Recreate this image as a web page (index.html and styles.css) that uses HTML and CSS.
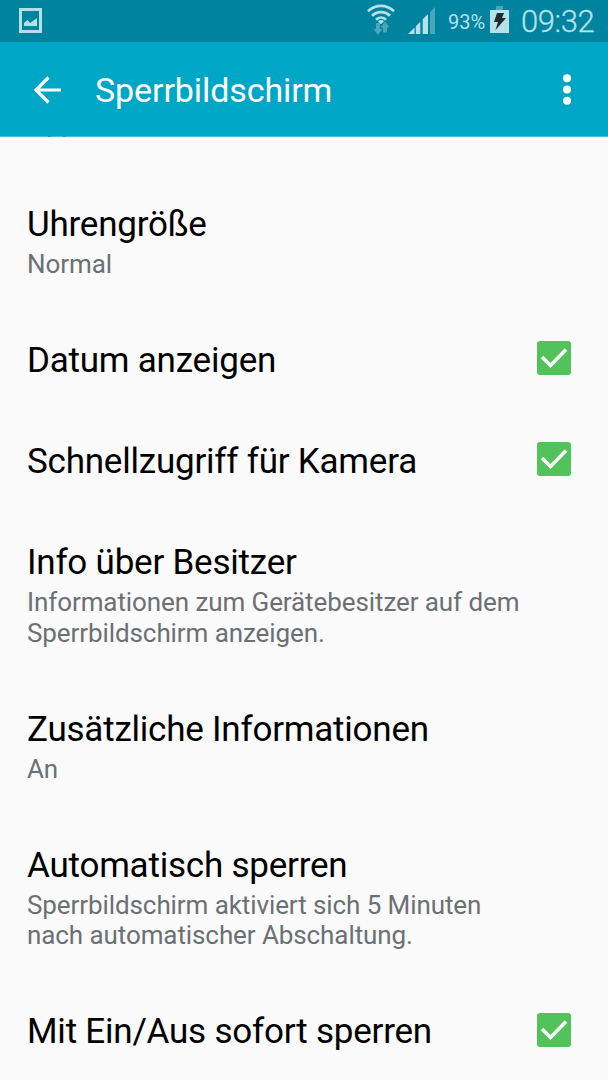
FILE: index.html
```html
<!DOCTYPE html>
<html lang="de">
<head>
<meta charset="utf-8">
<title>Sperrbildschirm</title>
<link rel="stylesheet" href="styles.css">
</head>
<body>
<div class="statusbar">
  <svg class="ic-picture" width="24" height="26" viewBox="0 0 24 26"><path fill="#b5dfe7" fill-rule="evenodd" d="M0 0h23v25H0zM3 3v19h17V3z"/><path fill="#b5dfe7" d="M5 18v-3l3.500-3 2.500 3 7-5V18z"/></svg>
  <div class="status-right">
    <svg class="ic-wifi" width="28" height="31" viewBox="0 0 28 31"><path fill="#49a7ba" d="M9 19h4v6h2.500L11 31l-4.500-6H9zM16 28.500v-5h-2.500l4.500-6 4.500 6H20v5z"/><g fill="none" stroke="#b5e1e9" stroke-width="2.800"><path d="M1 7.200C8.500.200 19.500.200 27 7.200"/><path d="M5 11.800C10 6.800 18 6.800 23 11.800"/><path d="M9 15.700C12 12.800 16 12.800 19 15.700"/></g><path fill="#b5e1e9" d="M11 17.200q3-2.200 6 0L14 20.200z"/></svg>
    <svg class="ic-signal" width="28" height="28" viewBox="0 0 28 28"><path fill="#b5e1e9" d="M0 27l6.500-6.500V27zM7.800 27v-7.800L12.300 14.700V27zM14.700 27V12.300L20 7V27z"/><path fill="#49a7ba" d="M22 27V5L27 0v27z"/></svg>
    <span class="percent">93%</span>
    <svg class="ic-battery" width="19" height="27" viewBox="0 0 19 27"><path fill="#49a7ba" d="M6 0h7v4H6z"/><path fill="#b5e1e9" d="M0 4h19v23H0z"/><path fill="#25292b" d="M7 7h7l-2 5h4L5.500 24l2.500-8H4z"/></svg>
    <span class="clock">09:32</span>
  </div>
</div>
<header class="appbar">
  <svg class="ic-back" width="28" height="28" viewBox="0 0 28 28"><path fill="none" stroke="#fff" stroke-width="3.200" d="M14.500 1.500L2 14l12.500 12.500M2 14h25"/></svg>
  <h1 class="appbar-title">Sperrbildschirm</h1>
  <svg class="ic-more" width="8" height="31" viewBox="0 0 8 31" fill="#fff"><circle cx="4" cy="4.300" r="4"/><circle cx="4" cy="15.500" r="4"/><circle cx="4" cy="26.700" r="4"/></svg>
</header>
<main class="list">
  <section class="row"><div><h2 class="title">Uhrengröße</h2><p class="sub">Normal</p></div></section>
  <section class="row"><h2 class="title">Datum anzeigen</h2><svg class="check" viewBox="0 0 34 34"><rect width="34" height="34" rx="3" fill="#52c25a"/><path fill="none" stroke="#fafafa" stroke-width="3.500" d="M5 16l8.500 8.500L29 8.500"/></svg></section>
  <section class="row"><h2 class="title">Schnellzugriff für Kamera</h2><svg class="check" viewBox="0 0 34 34"><rect width="34" height="34" rx="3" fill="#52c25a"/><path fill="none" stroke="#fafafa" stroke-width="3.500" d="M5 16l8.500 8.500L29 8.500"/></svg></section>
  <section class="row"><div><h2 class="title">Info über Besitzer</h2><p class="sub">Informationen zum Gerätebesitzer auf dem<br>Sperrbildschirm anzeigen.</p></div></section>
  <section class="row"><div><h2 class="title">Zusätzliche Informationen</h2><p class="sub">An</p></div></section>
  <section class="row"><div><h2 class="title">Automatisch sperren</h2><p class="sub">Sperrbildschirm aktiviert sich 5 Minuten<br>nach automatischer Abschaltung.</p></div></section>
  <section class="row"><h2 class="title">Mit Ein/Aus sofort sperren</h2><svg class="check" viewBox="0 0 34 34"><rect width="34" height="34" rx="3" fill="#52c25a"/><path fill="none" stroke="#fafafa" stroke-width="3.500" d="M5 16l8.500 8.500L29 8.500"/></svg></section>
</main>
</body>
</html>
```
FILE: styles.css
```css
* { box-sizing: border-box; }
body {
  margin: 0;
  height: 1080px;
  overflow: hidden;
  display: flex;
  flex-direction: column;
  background: #fafafa;
  color: #000;
  font-family: Roboto, sans-serif;
}
h1, h2, p { margin: 0; font-weight: 400; white-space: nowrap; }
svg { display: block; flex: none; }
.statusbar {
  flex: none;
  height: 42px;
  padding: 0 14px 0 19px;
  background: #00839e;
  color: #b5e1e9;
  display: flex;
  justify-content: space-between;
}
.ic-picture { margin-top: 8px; }
.status-right { display: flex; align-items: flex-start; }
.ic-wifi { margin: 4px 13px 0 0; }
.ic-signal { margin: 7px 12px 0 0; }
.percent { width: 37px; margin-right: 5px; font-size: 20px; line-height: 44px; }
.ic-battery { margin: 6px 12px 0 0; }
.clock {
  width: 73px;
  font-size: 31px;
  font-weight: 300;
  line-height: 43px;
  letter-spacing: -0.4px;
  -webkit-text-stroke: 0.3px #b5e1e9;
}
.appbar {
  flex: none;
  height: 95px;
  padding: 2px 37px 1px 34px;
  display: flex;
  align-items: center;
  background: #00a6c6;
  border-bottom: 1px solid #4abed4;
  color: #fff;
}
.appbar-title { flex: 1; margin-left: 33px; font-size: 34px; line-height: 40px; letter-spacing: -0.1px; }
.list { flex: none; padding-top: 36px; position: relative; }
/* descenders of the entry scrolled under the bar */
.list::before {
  content: "";
  position: absolute;
  top: -1px;
  left: 48px;
  width: 18px;
  height: 1px;
  background: linear-gradient(90deg, #2d9fb2 3px, transparent 3px 15px, #2d9fb2 15px);
}
.row {
  display: flex;
  align-items: center;
  justify-content: space-between;
  padding: 30.500px 37px 29.800px 27px;
}
.title { font-size: 35px; line-height: 41px; letter-spacing: -0.22px; }
.sub { margin-top: 4.200px; margin-bottom: 0.300px; font-size: 26px; line-height: 30.300px; letter-spacing: -0.09px; color: #6b7074; }
.check { width: 34px; height: 34px; margin: 0 0 4px; }
```
